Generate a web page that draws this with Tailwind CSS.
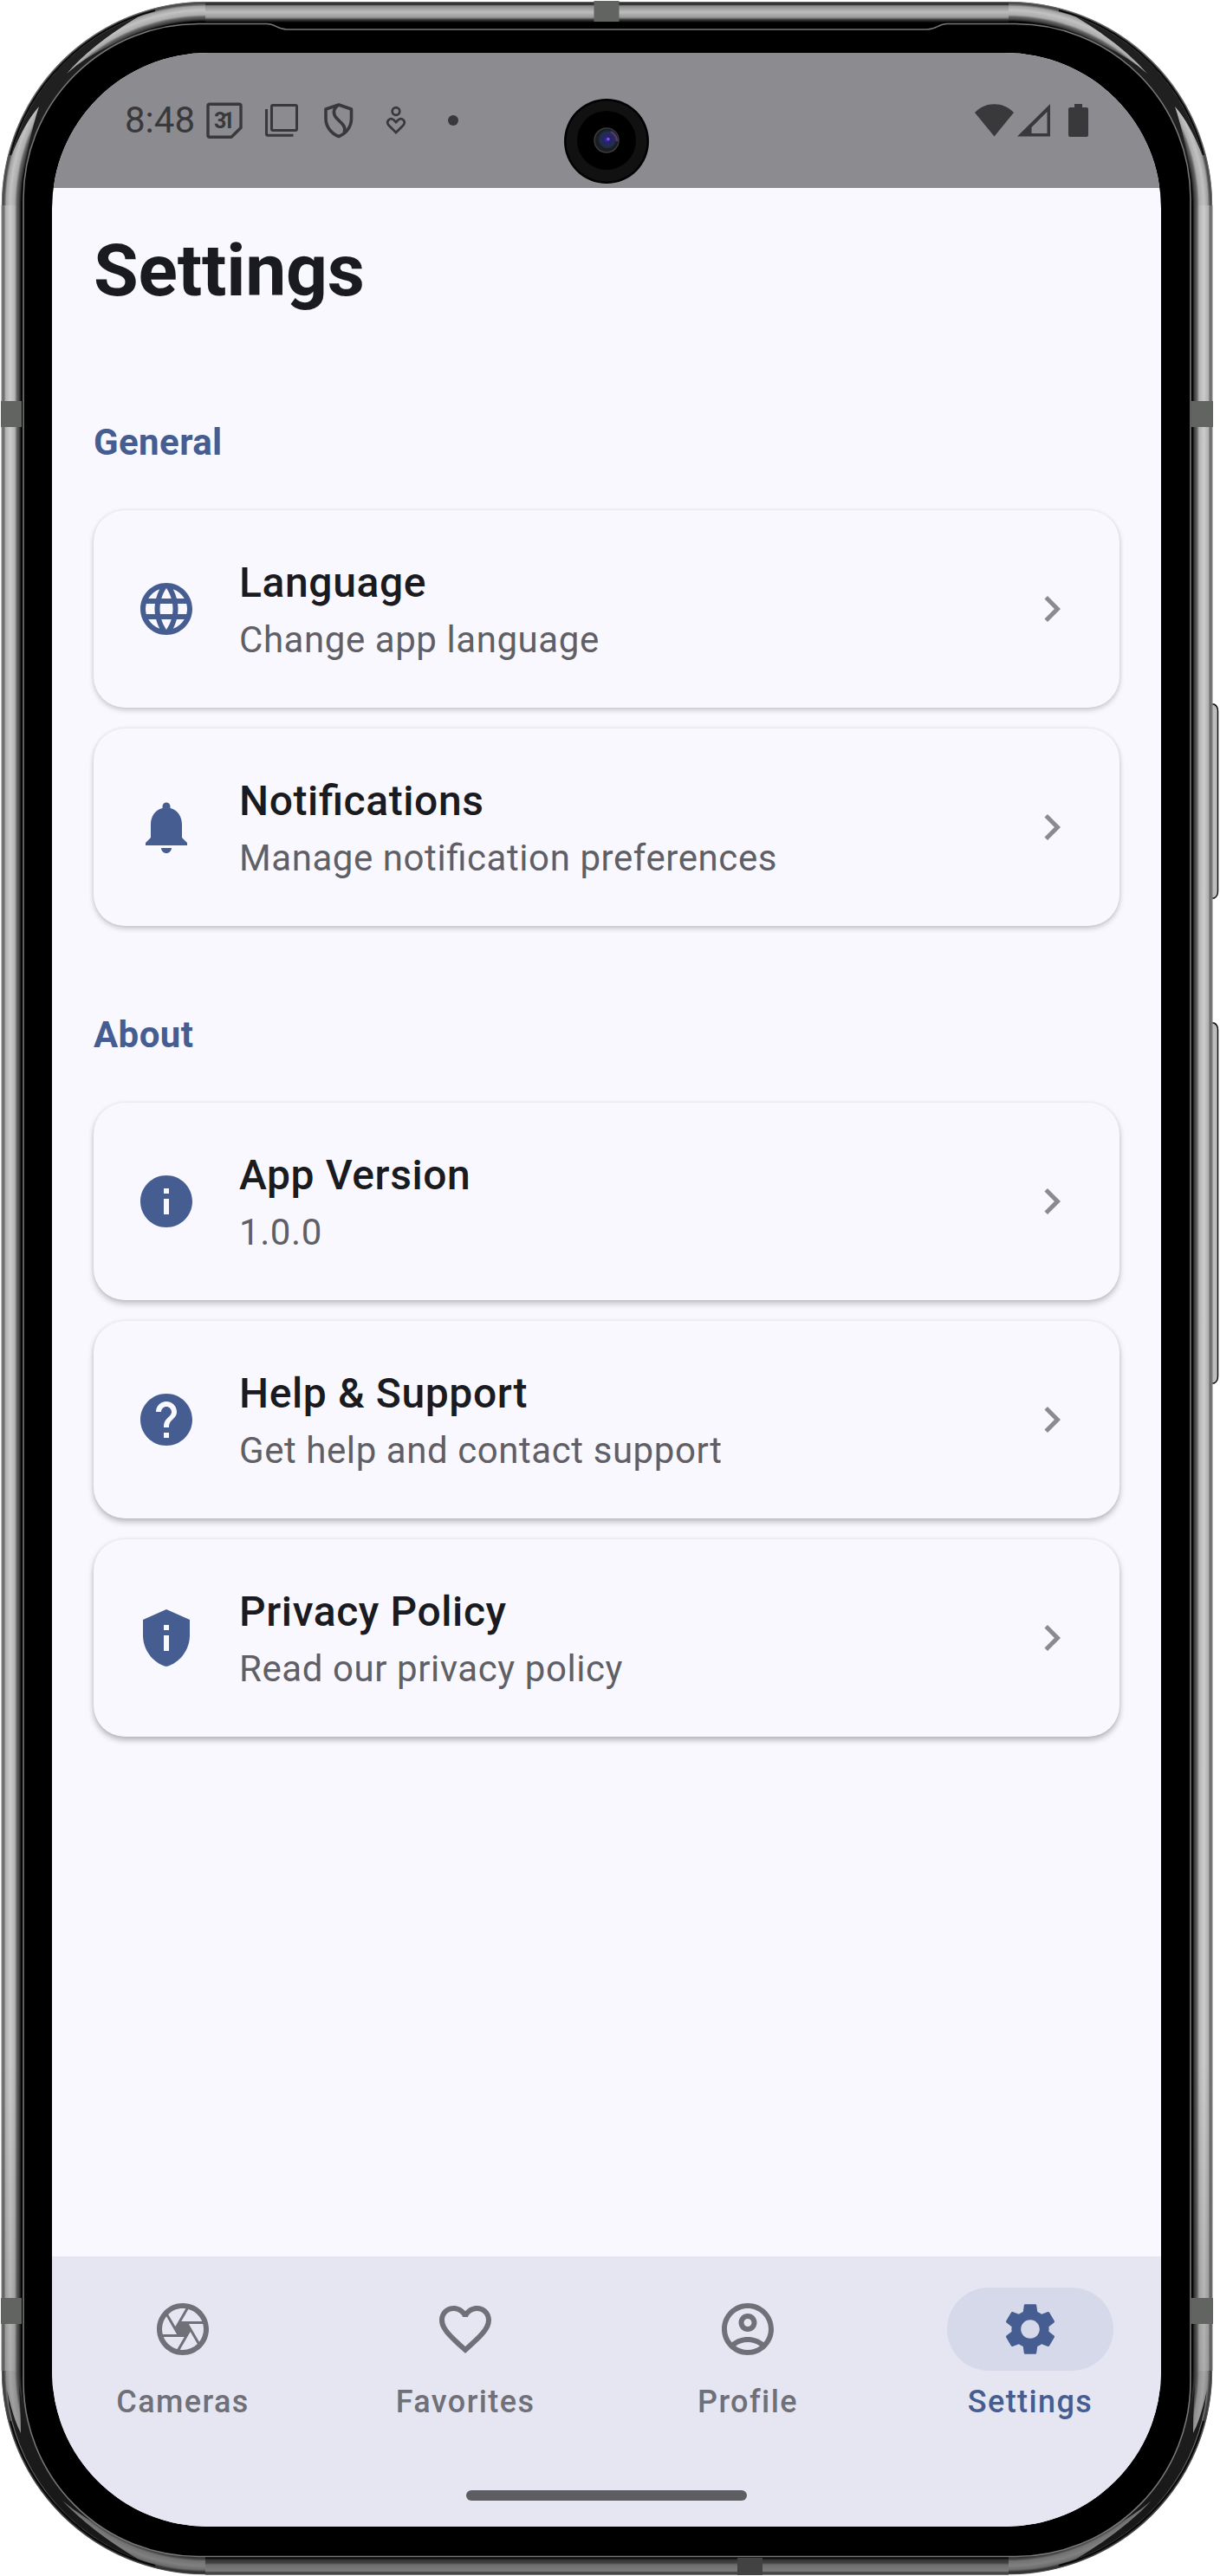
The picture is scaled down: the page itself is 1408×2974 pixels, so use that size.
<!DOCTYPE html>
<html lang="en">
<head>
<meta charset="utf-8">
<title>Settings</title>
<script src="https://cdn.jsdelivr.net/npm/@tailwindcss/browser@4"></script>
</head>
<body class="bg-white">
<svg class="hidden">
  <symbol id="chevron" viewBox="0 0 24 24"><path d="M10 6L8.59 7.41 13.17 12l-4.58 4.59L10 18l6-6z"/></symbol>
</svg>
<div class="relative w-[1408px] h-[2974px] overflow-hidden pl-[60px] pt-[61px] font-[Roboto,sans-serif]">

  <!-- device shell -->
  <svg class="absolute inset-0" width="1408" height="2974" viewBox="0 0 1408 2974" fill="none">
    <defs>
      <linearGradient id="side" x1="0" x2="1"><stop offset="0" stop-color="#808080"/><stop offset=".12" stop-color="#6c6c6c"/><stop offset=".2" stop-color="#b0b0b0"/><stop offset=".4" stop-color="#cbcbcb"/><stop offset=".62" stop-color="#b4b4b4"/><stop offset=".72" stop-color="#666"/><stop offset=".85" stop-color="#3a3a3a"/><stop offset=".93" stop-color="#000"/><stop offset="1" stop-color="#000"/></linearGradient>
      <linearGradient id="top" x1="0" x2="0" y1="0" y2="1"><stop offset="0" stop-color="#666"/><stop offset=".12" stop-color="#1c1c1c"/><stop offset=".2" stop-color="#8a8a8a"/><stop offset=".5" stop-color="#bdbdbd"/><stop offset=".75" stop-color="#989898"/><stop offset=".85" stop-color="#444"/><stop offset="1" stop-color="#000"/></linearGradient>
      <linearGradient id="bottom" x1="0" x2="0" y1="0" y2="1"><stop offset="0" stop-color="#000"/><stop offset=".12" stop-color="#333"/><stop offset=".3" stop-color="#444"/><stop offset=".4" stop-color="#6c6c6c"/><stop offset=".75" stop-color="#7c7c7c"/><stop offset=".9" stop-color="#333"/><stop offset="1" stop-color="#888"/></linearGradient>
      <radialGradient id="ring" gradientUnits="userSpaceOnUse" cx="237" cy="237" r="237"><stop offset=".895" stop-color="#000"/><stop offset=".904" stop-color="#3a3a3a"/><stop offset=".918" stop-color="#666"/><stop offset=".928" stop-color="#acacac"/><stop offset=".951" stop-color="#c2c2c2"/><stop offset=".970" stop-color="#a2a2a2"/><stop offset=".980" stop-color="#505050"/><stop offset=".986" stop-color="#484848"/><stop offset=".991" stop-color="#777"/><stop offset=".994" stop-color="#777" stop-opacity="0"/></radialGradient>
      <linearGradient id="fade" x1="0" x2="0" y1="2380" y2="2973" gradientUnits="userSpaceOnUse"><stop offset="0" stop-color="#000" stop-opacity="0"/><stop offset=".64" stop-color="#000" stop-opacity=".15"/><stop offset=".88" stop-color="#000" stop-opacity=".34"/></linearGradient>
      <radialGradient id="lens"><stop offset="0" stop-color="#4a30c0"/><stop offset=".3" stop-color="#2b1f6e"/><stop offset=".7" stop-color="#20304a"/><stop offset="1" stop-color="#16191d"/></radialGradient>
      <g id="upper">
        <path d="M0 0H237V237H0z" fill="url(#ring)"/>
        <path d="M13 180Q28 142 45 123Q33 160 24 215Q35 160 53 128Q66 107 82 90Q125 48 215 25Q120 45 77 85Q105 52 160 19A231 231 0 0 0 13 180Z" fill="#202020"/>
        <path d="M12 179A232.500 232.500 0 0 1 179 12" stroke="#080808" stroke-width="2"/>
      </g>
      <g id="lower">
        <path d="M0 0H237V237H0z" fill="url(#ring)"/>
        <path d="M8 215Q15 182 24 165Q24 185 22 220Q33 160 53 128Q66 107 82 90Q125 48 215 25Q120 45 72 87Q105 52 160 19A231 231 0 0 0 8 215Z" fill="#242424"/>
        <path d="M12 179A232.500 232.500 0 0 1 179 12" stroke="#080808" stroke-width="2"/>
      </g>
    </defs>
    <g stroke="#111" stroke-width="1.500">
      <path d="M1398 813h3q4.500 2 4.500 8v208q0 6-4.500 8h-3z" fill="#bdbdbd"/>
      <path d="M1398 1181h3q4.500 2 4.500 8v400q0 6-4.500 8h-3z" fill="#bdbdbd"/>
    </g>
    <rect x="20" y="20" width="1361" height="2935" rx="208" fill="#000"/>
    <use href="#upper"/><use href="#upper" transform="matrix(-1 0 0 1 1401 0)"/>
    <use href="#lower" transform="matrix(1 0 0 -1 0 2974)"/><use href="#lower" transform="matrix(-1 0 0 -1 1401 2974)"/>
    <rect x="1.500" y="237" width="25" height="2500" fill="url(#side)"/>
    <rect x="1.500" y="237" width="25" height="2500" fill="url(#side)" transform="matrix(-1 0 0 1 1401 0)"/>
    <rect x="2" y="2" width="1397" height="2970.500" rx="235" fill="url(#fade)"/>
    <rect x="237" y="2" width="927" height="24" fill="url(#top)"/>
    <rect x="237" y="2953" width="927" height="20" fill="url(#bottom)"/>
    <path d="M27 2749V229A202 202 0 0 1 229 27.500H308C318 27.500 320 34 331 34H1070C1081 34 1083 27.500 1093 27.500H1172A202 202 0 0 1 1374 229V2749A202 202 0 0 1 1172 2951.500H229A202 202 0 0 1 27 2749Z" stroke="#777" stroke-width="1.600" fill="#000"/>
    <g fill="#616461">
      <path d="M685.500 1h29v24h-29z"/>
      <path d="M1 463h24v30H1zM1375 463h25v30h-25zM1 2653h24v30H1zM1375 2653h25v30h-25z"/>
      <path d="M851 2953h29v20h-29z" fill="#424242"/>
    </g>
  </svg>

  <!-- screen -->
  <div class="relative flex h-[2856px] w-[1280px] flex-col overflow-hidden rounded-[180px] bg-[#f9f8ff]">
    <header class="flex h-[156px] shrink-0 items-center bg-[#8b8b90] pl-[84px] pr-[84px] text-[#39393b]">
      <span class="w-[82px] text-[42px] leading-none">8:48</span>
      <svg class="size-[66px]" viewBox="0 0 66 66" fill="none" stroke="currentColor" stroke-width="3.400" stroke-linejoin="round"><path d="M16 14.300h34q2 0 2 2V41.500L41 52.300H16q-2 0-2-2v-34q0-2 2-2z"/><text x="21" y="42" textLength="24" fill="currentColor" stroke="none" class="text-[25px] font-bold">31</text></svg>
      <svg class="size-[66px]" viewBox="0 0 66 66" fill="none" stroke="currentColor" stroke-width="3"><rect x="21.500" y="15.500" width="29" height="29" rx="1.500"/><path d="M15.500 20V48.500Q15.500 50.200 17 50.200H46.500"/></svg>
      <svg class="size-[66px]" viewBox="0 0 66 66" fill="none" stroke="currentColor" stroke-width="3.600" stroke-linejoin="round"><path d="M33 15L47.500 20V31C47.500 40 42 48 33 51.500C24 48 18 40 18 31V20Z"/><path d="M32 15.500C26 20 26 26 31 31L37 37Q41.500 42 39 47"/></svg>
      <svg class="size-[66px]" viewBox="0 0 66 66" fill="none" stroke="currentColor" stroke-width="2.700"><circle cx="33" cy="22.500" r="4.300"/><path d="M33 47L24.500 38.500C21 34 26 29 30.500 32.500L33 35L35.500 32.500C40 29 45 34 41.500 38.500Z"/></svg>
      <svg class="size-[66px]" viewBox="0 0 66 66" fill="currentColor"><circle cx="33" cy="33" r="6"/></svg>
      <div class="ml-auto flex items-center">
        <svg class="h-[38px] w-[45px]" viewBox="0 0 45 38" fill="currentColor"><path d="M22.500 37.500L0 10C12-3 33-3 45 10Z"/></svg>
        <svg class="ml-1 h-[38px] w-[38px]" viewBox="0 0 38 38" fill="currentColor" fill-rule="evenodd"><path d="M0 37.500L38 0V37.500ZM16.500 34H34.500V9L16.500 27Z"/></svg>
        <svg class="ml-[21px] h-[38px] w-[23px]" viewBox="0 0 23 38" fill="currentColor"><path d="M7 0h9v4h5q2 0 2 2v30q0 2-2 2H2q-2 0-2-2V6q0-2 2-2h5z"/></svg>
      </div>
    </header>

    <main class="flex grow flex-col px-12 pt-[42px]">
      <h1 class="text-[84px] font-bold leading-[108px] tracking-[-0.2px] text-[#1a1b20]">Settings</h1>
      <h2 class="mt-[114px] text-[42px] font-bold leading-[60px] tracking-[0.4px] text-[#465d91]">General</h2>
      <div class="mt-12 flex flex-col gap-6">
        <div class="flex h-[228px] items-center rounded-[36px] bg-[#f9f8ff] px-12 shadow-[0_3px_6px_rgba(0,0,0,0.18),0_0_4px_rgba(0,0,0,0.08)]">
          <svg class="size-[72px] fill-[#465d91]" viewBox="0 0 24 24"><path d="M11.990 2C6.470 2 2 6.480 2 12s4.470 10 9.990 10C17.520 22 22 17.520 22 12S17.520 2 11.990 2zm6.930 6h-2.950c-.32-1.250-.78-2.450-1.380-3.560 1.840.63 3.370 1.910 4.330 3.560zM12 4.040c.83 1.200 1.480 2.530 1.910 3.960h-3.820c.43-1.430 1.080-2.760 1.910-3.960zM4.260 14C4.100 13.360 4 12.690 4 12s.1-1.360.26-2h3.380c-.08.66-.14 1.320-.14 2 0 .68.06 1.340.14 2H4.260zm.82 2h2.950c.32 1.250.78 2.450 1.380 3.560-1.840-.63-3.370-1.900-4.330-3.560zm2.950-8H5.080c.96-1.660 2.490-2.930 4.330-3.560C8.810 5.550 8.350 6.750 8.030 8zM12 19.960c-.83-1.200-1.480-2.530-1.910-3.960h3.820c-.43 1.430-1.080 2.760-1.910 3.960zM14.340 14H9.660c-.09-.66-.16-1.320-.16-2 0-.68.07-1.350.16-2h4.680c.09.65.16 1.320.16 2 0 .68-.07 1.340-.16 2zm.25 5.560c.6-1.110 1.060-2.310 1.380-3.560h2.950c-.96 1.650-2.490 2.930-4.330 3.560zM16.360 14c.08-.66.14-1.320.14-2 0-.68-.06-1.340-.14-2h3.380c.16.64.26 1.310.26 2s-.1 1.360-.26 2h-3.380z"/></svg>
          <div class="ml-12 grow">
            <div class="text-[48px] font-medium leading-[72px] tracking-[0.6px] text-[#1a1b20]">Language</div>
            <div class="text-[42px] leading-[60px] tracking-[0.57px] text-[#5f5f65]">Change app language</div>
          </div>
          <svg class="size-[60px] fill-[#8a8a91]"><use href="#chevron"/></svg>
        </div>
        <div class="flex h-[228px] items-center rounded-[36px] bg-[#f9f8ff] px-12 shadow-[0_3px_6px_rgba(0,0,0,0.20),0_0_4px_rgba(0,0,0,0.08)]">
          <svg class="size-[72px] fill-[#465d91]" viewBox="0 0 24 24"><path d="M12 22c1.100 0 2-.9 2-2h-4c0 1.100.89 2 2 2zm6-6v-5c0-3.070-1.640-5.640-4.500-6.320V4c0-.83-.67-1.500-1.500-1.500s-1.500.67-1.500 1.500v.68C7.630 5.360 6 7.920 6 11v5l-2 2v1h16v-1l-2-2z"/></svg>
          <div class="ml-12 grow">
            <div class="text-[48px] font-medium leading-[72px] tracking-[0.6px] text-[#1a1b20] [font-feature-settings:'liga'_1]">Notifications</div>
            <div class="text-[42px] leading-[60px] tracking-[0.57px] text-[#5f5f65] [font-feature-settings:'liga'_1]">Manage notification preferences</div>
          </div>
          <svg class="size-[60px] fill-[#8a8a91]"><use href="#chevron"/></svg>
        </div>
      </div>

      <h2 class="mt-24 text-[42px] font-bold leading-[60px] tracking-[0.4px] text-[#465d91]">About</h2>
      <div class="mt-12 flex flex-col gap-6">
        <div class="flex h-[228px] items-center rounded-[36px] bg-[#f9f8ff] px-12 shadow-[0_4px_7px_rgba(0,0,0,0.23),0_0_4px_rgba(0,0,0,0.07)]">
          <svg class="size-[72px] fill-[#465d91]" viewBox="0 0 24 24"><path d="M12 2C6.480 2 2 6.480 2 12s4.480 10 10 10 10-4.480 10-10S17.520 2 12 2zm1 15h-2v-6h2v6zm0-8h-2V7h2v2z"/></svg>
          <div class="ml-12 grow">
            <div class="text-[48px] font-medium leading-[72px] tracking-[0.6px] text-[#1a1b20]">App Version</div>
            <div class="text-[42px] leading-[60px] tracking-[0.57px] text-[#5f5f65]">1.0.0</div>
          </div>
          <svg class="size-[60px] fill-[#8a8a91]"><use href="#chevron"/></svg>
        </div>
        <div class="flex h-[228px] items-center rounded-[36px] bg-[#f9f8ff] px-12 shadow-[0_4px_7px_rgba(0,0,0,0.25),0_0_4px_rgba(0,0,0,0.07)]">
          <svg class="size-[72px] fill-[#465d91]" viewBox="0 0 24 24"><path d="M12 2C6.480 2 2 6.480 2 12s4.480 10 10 10 10-4.480 10-10S17.520 2 12 2zm1 17h-2v-2h2v2zm2.070-7.750l-.9.920C13.450 12.900 13 13.500 13 15h-2v-.5c0-1.100.45-2.100 1.170-2.830l1.240-1.260c.37-.36.59-.86.59-1.410 0-1.100-.9-2-2-2s-2 .9-2 2H8c0-2.210 1.790-4 4-4s4 1.790 4 4c0 .88-.36 1.680-.93 2.250z"/></svg>
          <div class="ml-12 grow">
            <div class="text-[48px] font-medium leading-[72px] tracking-[0.6px] text-[#1a1b20]">Help &amp; Support</div>
            <div class="text-[42px] leading-[60px] tracking-[0.57px] text-[#5f5f65]">Get help and contact support</div>
          </div>
          <svg class="size-[60px] fill-[#8a8a91]"><use href="#chevron"/></svg>
        </div>
        <div class="flex h-[228px] items-center rounded-[36px] bg-[#f9f8ff] px-12 shadow-[0_4px_7px_rgba(0,0,0,0.27),0_0_4px_rgba(0,0,0,0.07)]">
          <svg class="size-[72px] fill-[#465d91]" viewBox="0 0 24 24" fill-rule="evenodd"><path d="M12 1L3 5v6c0 5.550 3.840 10.740 9 12 5.160-1.260 9-6.450 9-12V5zM11 7h2v2h-2zM11 11h2v6h-2z"/></svg>
          <div class="ml-12 grow">
            <div class="text-[48px] font-medium leading-[72px] tracking-[0.6px] text-[#1a1b20]">Privacy Policy</div>
            <div class="text-[42px] leading-[60px] tracking-[0.57px] text-[#5f5f65]">Read our privacy policy</div>
          </div>
          <svg class="size-[60px] fill-[#8a8a91]"><use href="#chevron"/></svg>
        </div>
      </div>
    </main>

    <footer class="flex h-[312px] shrink-0 flex-col items-center bg-[#e6e6f2] pt-9">
      <nav class="grid w-full grid-cols-4 gap-6 text-[36px] font-medium leading-[48px] tracking-[1.4px] text-[#6f7078]">
        <a class="flex flex-col items-center gap-3">
          <span class="flex h-24 w-48 items-center justify-center rounded-full"><svg class="size-[72px] fill-current" viewBox="0 0 24 24"><path d="M14.250 2.260l-.08-.04-.01.02C13.460 2.090 12.740 2 12 2 6.480 2 2 6.480 2 12s4.480 10 10 10 10-4.480 10-10c0-4.750-3.310-8.720-7.750-9.740zM19.410 9h-7.990l2.710-4.700c2.400.66 4.350 2.420 5.280 4.700zM13.100 4.080L10.270 9l-1.150 2L6.400 6.300C7.840 4.880 9.820 4 12 4c.37 0 .74.03 1.100.08zM5.700 7.090L8.540 12l1.150 2H4.260C4.100 13.360 4 12.690 4 12c0-1.850.64-3.550 1.700-4.910zM4.590 15h7.980l-2.710 4.700c-2.400-.67-4.340-2.420-5.270-4.700zm6.310 4.910L14.890 13l2.720 4.700C16.160 19.120 14.180 20 12 20c-.38 0-.74-.04-1.100-.09zm7.400-3l-4-6.910h5.430c.17.64.27 1.310.27 2 0 1.850-.64 3.550-1.700 4.910z"/></svg></span>
          <span>Cameras</span>
        </a>
        <a class="flex flex-col items-center gap-3">
          <span class="flex h-24 w-48 items-center justify-center rounded-full"><svg class="size-[72px] fill-current" viewBox="0 0 24 24"><path d="M16.500 3c-1.740 0-3.410.81-4.500 2.090C10.910 3.810 9.240 3 7.500 3 4.420 3 2 5.420 2 8.500c0 3.780 3.400 6.860 8.550 11.540L12 21.350l1.450-1.320C18.600 15.360 22 12.280 22 8.500 22 5.420 19.580 3 16.500 3zm-4.400 15.550l-.1.100-.1-.1C7.140 14.240 4 11.390 4 8.500 4 6.500 5.500 5 7.500 5c1.540 0 3.040.99 3.570 2.360h1.870C13.460 5.990 14.960 5 16.500 5c2 0 3.500 1.500 3.500 3.500 0 2.890-3.140 5.740-7.900 10.050z"/></svg></span>
          <span>Favorites</span>
        </a>
        <a class="flex flex-col items-center gap-3">
          <span class="flex h-24 w-48 items-center justify-center rounded-full"><svg class="size-[72px] fill-current" viewBox="0 0 24 24"><path d="M12 2C6.480 2 2 6.480 2 12s4.480 10 10 10 10-4.480 10-10S17.520 2 12 2zM7.350 18.500C8.660 17.560 10.260 17 12 17s3.340.56 4.650 1.500C15.340 19.440 13.740 20 12 20s-3.340-.56-4.650-1.500zm10.790-1.380C16.450 15.800 14.320 15 12 15s-4.450.8-6.140 2.120C4.700 15.730 4 13.950 4 12c0-4.420 3.580-8 8-8s8 3.580 8 8c0 1.950-.7 3.730-1.860 5.120zM12 6c-1.930 0-3.500 1.570-3.500 3.500S10.070 13 12 13s3.500-1.570 3.500-3.500S13.930 6 12 6zm0 5c-.83 0-1.500-.67-1.500-1.500S11.170 8 12 8s1.500.67 1.500 1.500S12.830 11 12 11z"/></svg></span>
          <span>Profile</span>
        </a>
        <a class="flex flex-col items-center gap-3 text-[#465d91]">
          <span class="flex h-24 w-48 items-center justify-center rounded-full bg-[#d5d9e9]"><svg class="size-[72px] fill-current" viewBox="0 0 24 24"><path d="M19.140 12.940c.04-.3.06-.61.06-.94 0-.32-.02-.64-.07-.94l2.030-1.580c.18-.14.23-.41.12-.61l-1.920-3.320c-.12-.22-.37-.29-.59-.22l-2.390.96c-.5-.38-1.030-.7-1.620-.94l-.36-2.540c-.04-.24-.24-.41-.48-.41h-3.840c-.24 0-.43.17-.47.41l-.36 2.540c-.59.24-1.130.57-1.620.94l-2.390-.96c-.22-.08-.47 0-.59.22L2.740 8.870c-.12.21-.08.47.12.61l2.030 1.580c-.05.3-.09.63-.09.94s.02.64.07.94l-2.030 1.580c-.18.14-.23.41-.12.61l1.920 3.320c.12.22.37.29.59.22l2.390-.96c.5.38 1.030.7 1.620.94l.36 2.540c.05.24.24.41.48.41h3.840c.24 0 .44-.17.47-.41l.36-2.540c.59-.24 1.130-.56 1.620-.94l2.390.96c.22.08.47 0 .59-.22l1.920-3.320c.12-.22.07-.47-.12-.61l-2.010-1.580zM12 15.600c-1.980 0-3.600-1.620-3.600-3.600s1.620-3.600 3.600-3.600 3.600 1.620 3.600 3.600-1.620 3.600-3.600 3.600z"/></svg></span>
          <span>Settings</span>
        </a>
      </nav>
      <div class="mt-[78px] h-3 w-[324px] rounded-full bg-[#5d5d62]"></div>
    </footer>
  </div>

  <!-- front camera -->
  <svg class="absolute left-[651px] top-[114px] size-[98px]" viewBox="0 0 98 98">
    <circle cx="49" cy="49" r="49"/>
    <circle cx="49" cy="49" r="46.500" fill="#111"/>
    <circle cx="49" cy="48" r="34"/>
    <circle cx="49" cy="48" r="14" fill="#1c1e20" stroke="#3a3a3c" stroke-width="1.500"/>
    <circle cx="50" cy="47" r="12" fill="url(#lens)"/>
    <path d="M54 38q7 4 7 11" fill="none" stroke="#5d3576" stroke-width="2.500"/>
    <circle cx="51" cy="46.500" r="1.500" fill="#7b63ff"/>
  </svg>
</div>
</body>
</html>
